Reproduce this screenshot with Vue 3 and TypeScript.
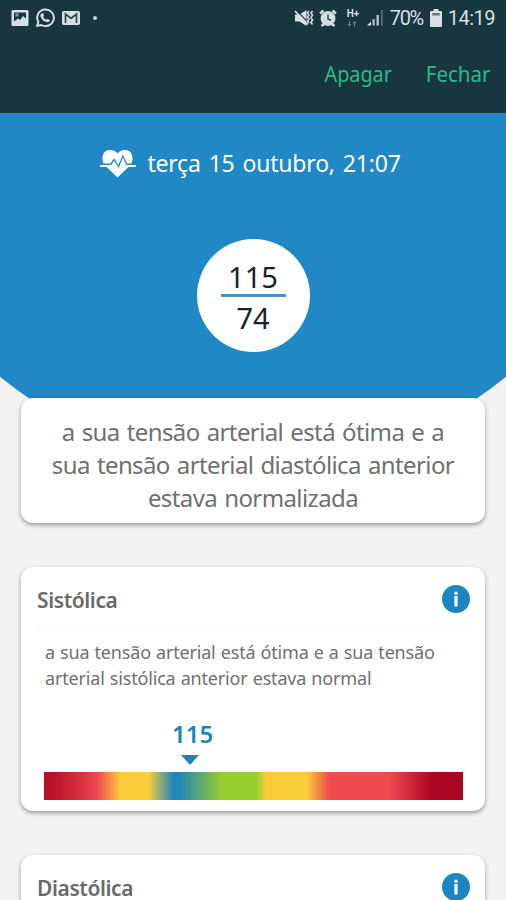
<script setup lang="ts">
interface Reading {
  title: string
  lines: string[]
  value?: number
  marker?: number
}

const systolic = 115
const diastolic = 74

const summary: string[] = [
  'a sua tensão arterial está ótima e a',
  'sua tensão arterial diastólica anterior',
  'estava normalizada',
]

const readings: Reading[] = [
  {
    title: 'Sistólica',
    lines: ['a sua tensão arterial está ótima e a sua tensão', 'arterial sistólica anterior estava normal'],
    value: systolic,
    marker: 34.9,
  },
  {
    title: 'Diastólica',
    lines: [],
  },
]
</script>

<template>
  <div class="screen">
    <header class="top">
      <div class="status">
        <div class="notifications">
          <svg width="18" height="18" viewBox="0 0 18 18">
            <rect x="0.5" y="1" width="17" height="16" rx="1.5" fill="#d5dfe5" />
            <path d="M3 3.500h12v6l-3-2.500-3 4-2-1.500-4 3z" fill="#18363f" />
            <path d="M4.500 4.500h3v3h-3z" fill="#8798a0" />
          </svg>
          <svg width="20" height="20" viewBox="0 0 20 20">
            <path d="M2.200 17.800l1.100-4A8.300 8.300 0 1 1 6.500 17z" fill="none" stroke="#d5dfe5" stroke-width="2" />
            <path d="M6.700 5.400l1.300-.2 1.100 2.600-.9 1.200c.7 1.300 1.700 2.200 3 2.800l1.100-1.100 2.500 1.200c-.1 1.700-1.500 2.500-3 2.200-3.500-.8-6.500-4-6.400-6.700 0-.8.600-1.600 1.300-2z" fill="#d5dfe5" />
          </svg>
          <svg width="18" height="14" viewBox="0 0 18 14">
            <rect width="18" height="14" rx="1.800" fill="#d5dfe5" />
            <path d="M3.500 12V3L9 7.500 14.500 3v9" fill="none" stroke="#304650" stroke-width="1.700" />
          </svg>
          <i class="dot"></i>
        </div>
        <div class="indicators">
          <svg class="mute" width="20" height="18" viewBox="0 0 20 18">
            <path d="M1 5.500h4.500l7-4.500v16l-7-4.500H1z" fill="#d5dfe5" />
            <path d="M1.500 0.500l12.500 13" stroke="#18363f" stroke-width="1.200" />
            <path d="M1 2l13 13.500" stroke="#d5dfe5" stroke-width="1.800" />
            <path d="M15 2l-1.500 2L15 6l-1.500 2 1.500 2-1.500 2 1.500 2M18.500 2L17 4l1.500 2L17 8.500l1.500 2.500L17 13.500l1.500 2" fill="none" stroke="#d5dfe5" stroke-width="1.600" />
          </svg>
          <svg class="alarm" width="18" height="18" viewBox="0 0 18 18">
            <circle cx="9" cy="9.500" r="7.400" fill="#d5dfe5" />
            <path d="M1 4.500L4.500 1.500M17 4.500L13.500 1.500M2.500 17l3-2.500M15.500 17l-3-2.500" stroke="#d5dfe5" stroke-width="2.400" />
            <path d="M9 5.500V10l3 1.200" fill="none" stroke="#304650" stroke-width="1.500" />
          </svg>
          <div class="network">
            <span>H+</span>
            <svg width="10" height="6" viewBox="0 0 10 6">
              <path d="M2 0v3H.5L2.500 5.500 4.500 3H3V0zM7 5.500v-3H5.500L7.500 0l2 2.500H8v3z" fill="#6f8289" />
            </svg>
          </div>
          <svg class="signal" width="17" height="17" viewBox="0 0 17 17">
            <path d="M0 16.500h4v-4z" fill="#d5dfe5" />
            <path d="M5.500 10h2.200v6.500H5.500zM9.500 6h2.400v10.500H9.500z" fill="#b3c0c6" />
            <path d="M14 1h1.800v15.500H14z" fill="#586d76" />
          </svg>
          <span class="percent">70%</span>
          <svg class="battery" width="12" height="18" viewBox="0 0 12 18">
            <path d="M3.500 0h5v2H11q1 0 1 1v14q0 1-1 1H1q-1 0-1-1V3q0-1 1-1h2.500z" fill="#d5dfe5" />
            <path d="M2.300 4h7.400v2.500H2.300z" fill="#637780" />
          </svg>
          <span class="clock">14:19</span>
        </div>
      </div>
      <nav class="actions">
        <a class="delete">Apagar</a>
        <a class="close">Fechar</a>
      </nav>
    </header>

    <section class="hero">
      <div class="when">
        <svg width="36" height="30" viewBox="0 0 36 30">
          <path d="M17.500 29.500L4 16.500C.5 10 3 2 10 2q5 0 7.500 3.500Q20 2 25 2c7 0 9.500 8 6 14.500z" fill="#fff" />
          <path d="M0 16.300h11l3-4.500 4.500 7.200 4.300-10.500 3.700 7.800H36" fill="none" stroke="#1f88c5" stroke-width="1.700" />
          <path d="M0 18h11.500l2.600-3.500 4.800 7.500 4-10 2.600 6H36" fill="none" stroke="#fff" stroke-width="1.900" />
        </svg>
        <span>terça 15 outubro, 21:07</span>
      </div>
      <div class="pressure">
        <span>{{ systolic }}</span>
        <i></i>
        <span>{{ diastolic }}</span>
      </div>
    </section>

    <main class="content">
      <section class="card summary">
        <p v-for="line in summary" :key="line">{{ line }}</p>
      </section>

      <section v-for="r in readings" :key="r.title" class="card reading">
        <div class="heading">
          <h2>{{ r.title }}</h2>
          <svg width="28" height="28" viewBox="0 0 28 28">
            <circle cx="14" cy="14" r="14" fill="#1c86c4" />
            <path d="M12.400 6.700h3.200v3h-3.200zM12.400 11h3.200v10.500h-3.200z" fill="#fff" />
          </svg>
        </div>
        <div class="details">
          <p v-for="line in r.lines" :key="line">{{ line }}</p>
        </div>
        <div v-if="r.value" class="scale">
          <div class="pointer">
            <strong>{{ r.value }}</strong>
            <span class="track"><i :style="{ marginLeft: r.marker + '%' }"></i></span>
          </div>
          <div class="gauge"></div>
        </div>
      </section>
    </main>
  </div>
</template>

<style>
body {
  margin: 0;
  overflow: hidden;
}
</style>

<style scoped>
.screen {
  width: 506px;
  height: 900px;
  overflow: hidden;
  background: #f3f3f3;
  font-family: "Noto Sans", "Open Sans", sans-serif;
  color: #707070;
}
.top {
  height: 113px;
  background: #18363f;
}
.status {
  height: 35px;
  display: flex;
  justify-content: space-between;
  align-items: center;
  color: #d5dfe5;
  font-family: Roboto, sans-serif;
}
.notifications {
  display: flex;
  align-items: center;
  gap: 6.500px;
  padding-left: 10.500px;
}
.dot {
  width: 4px;
  height: 4px;
  border-radius: 50%;
  background: #c9d4da;
  margin-left: 7px;
}
.indicators {
  display: flex;
  align-items: center;
  padding-right: 11px;
  font-size: 20px;
  white-space: nowrap;
}
.alarm { margin-left: 5px; }
.network {
  width: 13px;
  height: 18px;
  margin-left: 10px;
  font-size: 10px;
  line-height: 10px;
  font-weight: 700;
  display: flex;
  flex-direction: column;
  gap: 2px;
}
.signal { margin-left: 7px; }
.percent { margin-left: 6px; width: 34px; letter-spacing: -1.300px; }
.battery { margin-left: 6px; }
.clock { margin-left: 6px; letter-spacing: -0.500px; }
.actions {
  height: 76px;
  display: flex;
  justify-content: flex-end;
  align-items: center;
  gap: 29px;
  padding-right: 16px;
  color: #2bb98b;
  font-size: 22px;
}
.actions a {
  white-space: nowrap;
  transform-origin: right;
}
.delete { transform: scaleX(0.9); margin-right: 0; }
.close { transform: scaleX(0.93); }
.hero {
  height: 359px;
  margin-bottom: -74px;
  background: #1f88c5;
  clip-path: circle(400px at 50% -46px);
  display: flex;
  flex-direction: column;
  align-items: center;
}
.when {
  display: flex;
  align-items: center;
  gap: 11px;
  margin-top: 34px;
  height: 32px;
  color: #fff;
  font-size: 23px;
  letter-spacing: -0.200px;
  word-spacing: 2.200px;
  white-space: nowrap;
  padding-right: 5px;
}
.pressure {
  width: 113px;
  height: 113px;
  margin-top: 60px;
  border-radius: 50%;
  background: #fff;
  color: #1b2226;
  display: flex;
  flex-direction: column;
  align-items: center;
  justify-content: center;
  font-size: 29px;
  line-height: 38px;
}
.pressure span {
  padding-top: 2px;
  margin-bottom: -2px;
}
.pressure i {
  width: 65px;
  height: 3px;
  background: #4b8fc4;
}
.content {
  position: relative;
  padding: 0 21px;
}
.card {
  background: #fff;
  border-radius: 12px;
  box-shadow: 0 2px 4px rgba(0, 0, 0, 0.38);
}
p, h2 { margin: 0; }
.summary {
  height: 125px;
  padding-top: 17px;
  box-sizing: border-box;
  text-align: center;
  font-size: 24px;
  line-height: 33px;
  letter-spacing: -0.600px;
  word-spacing: 1.400px;
  white-space: nowrap;
}
.reading {
  height: 244px;
  margin-top: 44px;
}
.heading {
  height: 63px;
  box-sizing: border-box;
  margin: 0 15px;
  border-bottom: 2px solid #fafafa;
  display: flex;
  align-items: center;
  justify-content: space-between;
  padding-top: 3px;
}
h2 {
  padding: 2px 0 0 1px;
  font-size: 21px;
  line-height: 30px;
  font-weight: 600;
  letter-spacing: -0.400px;
  color: #6a6a6a;
}
.details {
  padding: 9px 0 0 24px;
  font-size: 18px;
  line-height: 26px;
  letter-spacing: -0.170px;
  word-spacing: 0.600px;
  white-space: nowrap;
}
.scale {
  margin: 25px 22px 0 23px;
}
.pointer strong {
  display: block;
  margin-left: 128px;
  font-size: 24px;
  line-height: 36px;
  font-weight: 600;
  color: #1f82bd;
}
.track {
  display: block;
  height: 20px;
}
.track i {
  display: block;
  position: relative;
  top: 3px;
  width: 0;
  border: 9px solid transparent;
  border-top: 10px solid #1f82bd;
  border-bottom: 0;
  transform: translateX(-9px);
}
.gauge {
  height: 28px;
  background: linear-gradient(90deg, #b70f23 0, #bd1529 14px, #ef4650 53px, #fccd3b 77px, #fccd3b 104px, #1e85bd 130px, #2488b5 136px, #96cd30 178px, #96cd30 212px, #fccb37 222px, #f8cf38 262px, #f04b50 286px, #f04b50 344px, #ac0722 388px, #a80520 100%);
}
</style>
